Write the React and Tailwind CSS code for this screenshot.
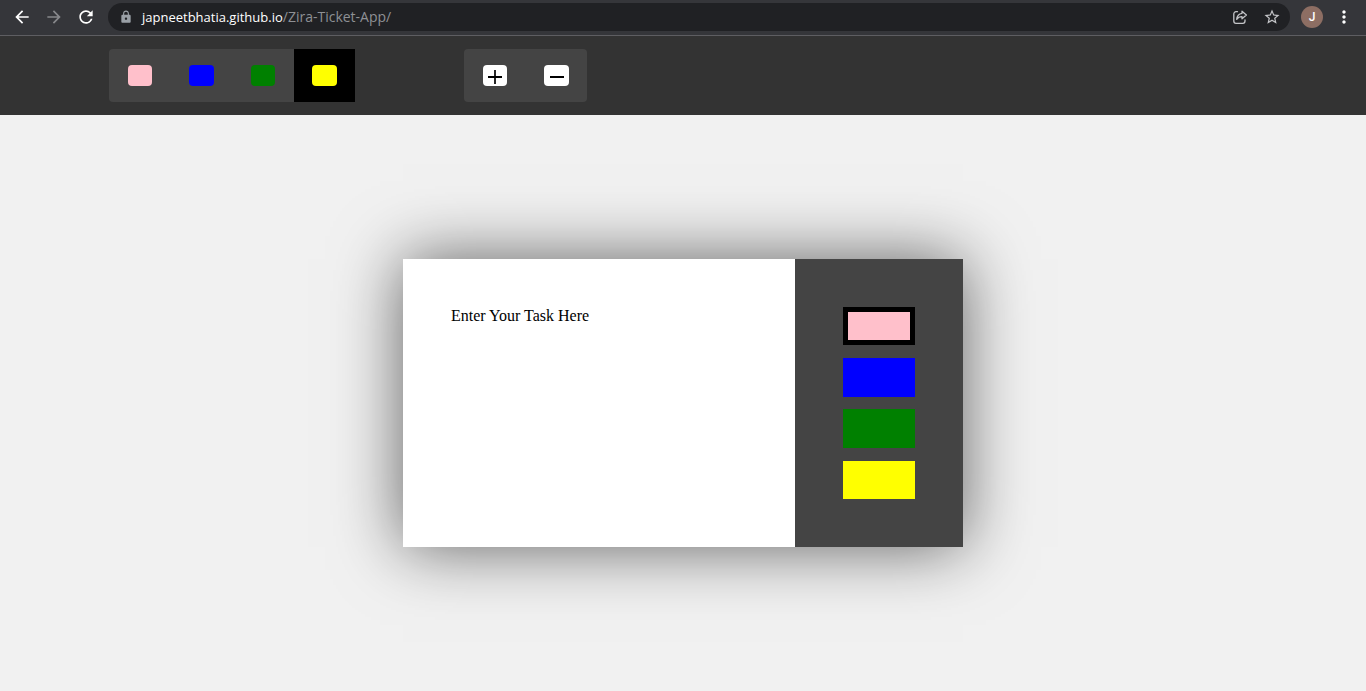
import { useState } from "react";
import {
  MdArrowBack,
  MdArrowForward,
  MdLock,
  MdMoreVert,
  MdRefresh,
  MdStarBorder,
} from "react-icons/md";

const COLORS = [
  { name: "pink", bg: "bg-[#ffc0cb]" },
  { name: "blue", bg: "bg-[#0000ff]" },
  { name: "green", bg: "bg-[#008000]" },
  { name: "yellow", bg: "bg-[#ffff00]" },
];

function ShareIcon() {
  return (
    <svg viewBox="0 0 16 16" className="size-4" fill="none" stroke="currentColor" strokeWidth="1.3" strokeLinejoin="round" aria-hidden="true">
      <path d="M5.500 2.700H4a2.200 2.200 0 0 0-2.200 2.200v7.200A2.200 2.200 0 0 0 4 14.300h6.800a2.200 2.200 0 0 0 2.200-2.200v-1.300" strokeLinecap="round" />
      <path d="M10 2.200 14.400 6 10 9.800V7.700C7.600 7.700 5.900 8.600 4.700 10.400 5 7.200 6.800 4.700 10 4.300Z" />
    </svg>
  );
}

function BrowserBar() {
  return (
    <div className="flex h-9 items-start border-b border-[#5e5e62] bg-[#35363a] pt-[3px] font-['Open_Sans',sans-serif]">
      <nav className="flex h-7 items-center gap-3 pl-3 text-xl" aria-label="Browser">
        <button aria-label="Back" className="text-white"><MdArrowBack /></button>
        <button aria-label="Forward" className="text-[#87888b]"><MdArrowForward /></button>
        <button aria-label="Reload" className="text-white"><MdRefresh /></button>
      </nav>
      <div className="ml-3 flex h-7 flex-1 items-center rounded-full bg-[#202124] pr-[9px] pl-[11px] text-[#c4c5c8]">
        <MdLock className="size-3.5 text-[#9aa0a6]" aria-hidden="true" />
        <a href="#board" className="ml-[9px] flex flex-1 items-baseline leading-5 text-[#8e9094]">
          <span className="text-[13px] text-white">japneetbhatia.github.io</span>
          <span className="text-sm">/Zira-Ticket-App/</span>
        </a>
        <button aria-label="Share"><ShareIcon /></button>
        <button aria-label="Bookmark" className="ml-[15px]"><MdStarBorder className="size-[18px]" /></button>
      </div>
      <button aria-label="Profile" className="mt-[3px] ml-[11px] flex size-[22px] items-center justify-center rounded-full bg-[#8d6e63] font-['Roboto',sans-serif] text-xs font-medium text-white">J</button>
      <button aria-label="Menu" className="mt-1 mr-3 ml-[11px] text-white"><MdMoreVert className="size-5" /></button>
    </div>
  );
}

function Toolbar({ filter, onFilter, onAdd, onRemove }) {
  const tool = "flex flex-1 items-center justify-center";
  const tile = "flex h-[21px] w-2/5 items-center justify-center rounded";
  return (
    <header className="flex h-[79px] items-center bg-[#333333]">
      <div className="ml-[8%] flex h-[53px] w-[18%] rounded bg-[#444444]">
        {COLORS.map(({ name, bg }) => (
          <button
            key={name}
            aria-label={`Show ${name} tickets`}
            aria-pressed={filter === name}
            onClick={() => onFilter(name)}
            className={`${tool} ${filter === name ? "bg-black" : ""}`}
          >
            <span className={`${tile} ${bg}`} />
          </button>
        ))}
      </div>
      <div className="ml-[8%] flex h-[53px] w-[9%] rounded bg-[#444444]">
        <button aria-label="Add ticket" onClick={onAdd} className={tool}>
          <span className={`${tile} bg-white`}>
            <svg viewBox="0 0 16 16" className="mt-0.5 size-4" stroke="black" aria-hidden="true">
              <path d="M1 8h14" strokeWidth="2" />
              <path d="M8 1v14" strokeWidth="1.7" />
            </svg>
          </span>
        </button>
        <button aria-label="Remove ticket" onClick={onRemove} className={tool}>
          <span className={`${tile} bg-white`}>
            <svg viewBox="0 0 16 16" className="mt-0.5 size-4" stroke="black" strokeWidth="2" aria-hidden="true">
              <path d="M1 8h14" />
            </svg>
          </span>
        </button>
      </div>
    </header>
  );
}

function TicketModal() {
  const [color, setColor] = useState("pink");
  return (
    <section aria-label="New ticket" className="flex h-72 w-[41%] shadow-[0_0_64px_rgba(0,0,0,0.6)]">
      <textarea
        aria-label="Task"
        defaultValue="Enter Your Task Here"
        className="w-[70%] resize-none bg-white p-12 font-['Liberation_Serif',serif] text-base leading-[18px] text-black outline-none"
      />
      <div className="flex w-[30%] flex-col justify-between bg-[#444444] p-12">
        {COLORS.map(({ name, bg }) => (
          <button
            key={name}
            aria-label={`Priority ${name}`}
            aria-pressed={color === name}
            onClick={() => setColor(name)}
            className={`h-1/5 w-full ${bg} ${color === name ? "border-5 border-black" : ""}`}
          />
        ))}
      </div>
    </section>
  );
}

export default function App() {
  const [filter, setFilter] = useState("yellow");
  const [open, setOpen] = useState(true);
  return (
    <div className="flex min-h-screen flex-col bg-[#f1f1f1]">
      <BrowserBar />
      <Toolbar filter={filter} onFilter={setFilter} onAdd={() => setOpen(true)} onRemove={() => setOpen(false)} />
      <main id="board" className="flex flex-1 items-center justify-center">
        {open && <TicketModal />}
      </main>
    </div>
  );
}
